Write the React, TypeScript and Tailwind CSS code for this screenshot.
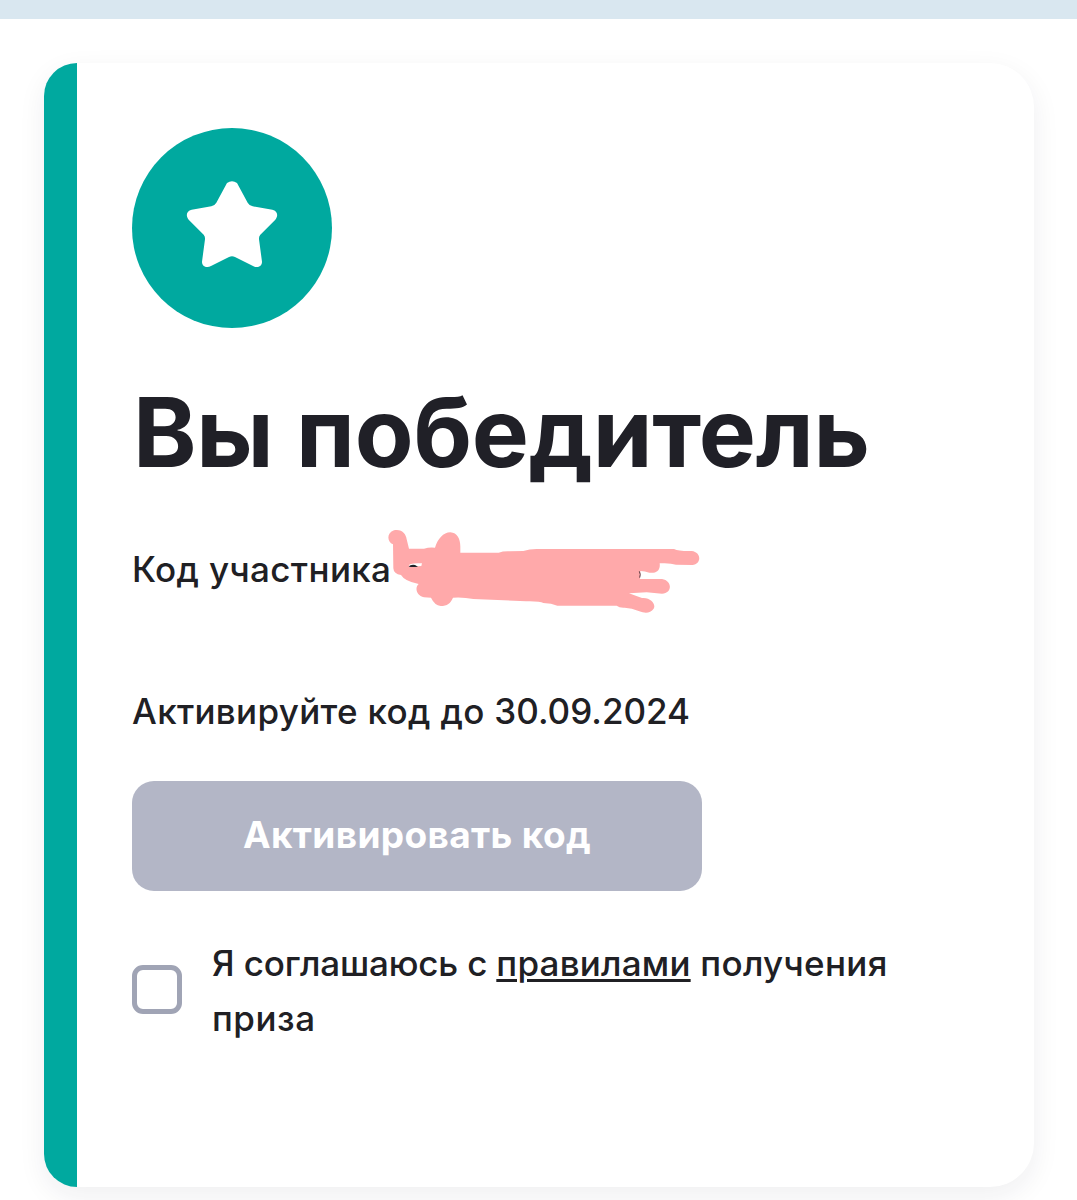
const Star = () => (
  <svg className="h-[200px] w-[200px]" viewBox="0 0 600 600" fill="none">
    <circle cx="300" cy="300" r="300" fill="#00a99f" />
    <path
      d="M285 165Q300 154 315 165L347 224Q352 233 362 235L421 245C436 248 440 263 430 275L385 320Q380 326 381 334L390 401C390 415 376 421 363 414L309 387Q300 382 291 387L237 414C224 421 210 415 210 401L219 334Q220 326 215 320L170 275C160 263 164 248 179 245L238 235Q248 233 253 224Z"
      fill="white"
    />
  </svg>
);

const Scribble = () => (
  <svg
    className="absolute -top-[22px] left-[248px] h-[110px] w-[340px]"
    viewBox="0 0 1020 330"
    fill="none"
  >
    <path
      d="M39 73C20 64 20 38 42 31C66 26 78 42 80 58L87 86L132 86Q148 81 165 83C173 57 190 37 211 37C232 38 241 57 241 80L241 98L356 98Q370 93 390 94L430 93Q448 87 470 87L882 87Q897 94 935 93C965 96 965 133 937 135L888 134Q870 128 839 130C842 151 828 161 808 158Q795 153 781 153L780 177L846 177C878 182 877 220 846 221L800 217L747 220Q765 227 786 234C812 231 829 253 821 266C811 281 794 280 778 274Q755 264 734 263Q718 264 710 257L532 257Q515 250 490 249Q480 243 438 244L280 237Q250 231 219 233C211 250 202 258 182 258Q164 256 153 233L132 232C108 226 104 202 116 192Q74 184 63 165Q41 162 40 145Z"
      fill="#ffa9aa"
    />
    <path d="M89 133Q104 128 126 130L124 138L110 139Q98 137 87 141Z" fill="white" />
    <path d="M86 140Q91 133 105 135L114 140Q99 142 86 140Z" fill="#202027" />
    <path d="M778 154Q783 163 779 173" stroke="#5b3b42" strokeWidth="3" />
  </svg>
);

export default function App() {
  return (
    <div className="h-[1200px] w-[1077px] overflow-hidden bg-white font-['Inter',sans-serif] text-[#202024]">
      <div className="h-[19px] bg-[#d9e7f0]" />
      <div className="mt-11 ml-11 flex h-[1124px] w-[990px] overflow-hidden rounded-l-[33px] rounded-r-[44px] bg-white shadow-[0_9px_28px_rgba(30,25,60,0.07)]">
        <div className="w-[33px] shrink-0 bg-[#00a99f]" />
        <div className="flex flex-1 flex-col items-start pt-[65px] pl-[55px]">
          <Star />
          <h1 className="mt-12 ml-px h-[112px] text-[96px] leading-[112px] font-bold tracking-[-0.2px] whitespace-nowrap text-[#202027]">
            Вы победитель
          </h1>
          <div className="relative mt-[54px] h-[55px]">
            <p className="text-[35px] leading-[54px] font-medium tracking-[0.35px] whitespace-nowrap">
              Код участника
            </p>
            <Scribble />
          </div>
          <p className="mt-[87px] h-[55px] text-[35px] leading-[55px] font-medium whitespace-nowrap">
            <span className="tracking-[0.32px]">Активируйте код до </span>30.09.2024
          </p>
          <button className="mt-[42px] h-[110px] w-[570px] rounded-[22px] bg-[#b3b6c6] pb-[2px] text-[37px] font-bold tracking-[0.35px] whitespace-nowrap text-white">
            Активировать код
          </button>
          <label className="mt-[45px] flex items-center gap-[30px]">
            <span className="-mt-1 h-[49px] w-[50px] shrink-0 rounded-[11px] border-5 border-[#a0a4b5]" />
            <span className="text-[35px] leading-[55px] font-medium whitespace-nowrap">
              <span className="tracking-[-0.18px]">Я соглашаюсь с </span>
              <a className="tracking-[0.2px] underline decoration-[3px] underline-offset-[3px]">
                правилами
              </a>
              <span className="tracking-[0.3px]"> получения</span>
              <br />
              <span className="tracking-[0.5px]">приза</span>
            </span>
          </label>
        </div>
      </div>
    </div>
  );
}
